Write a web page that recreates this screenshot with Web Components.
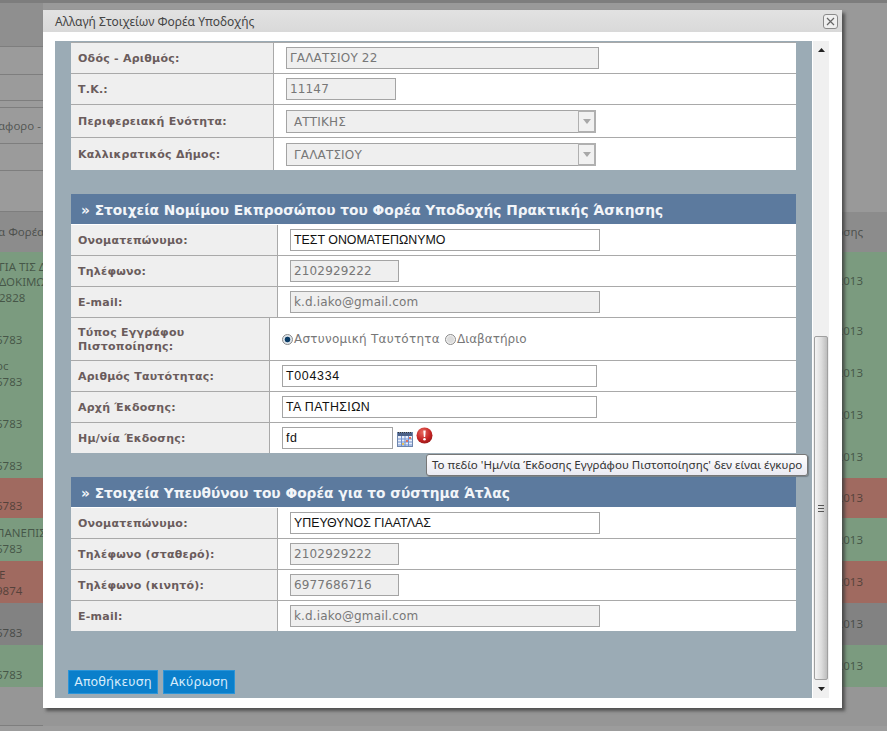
<!DOCTYPE html>
<html lang="el">
<head>
<meta charset="utf-8">
<title>Αλλαγή Στοιχείων Φορέα Υποδοχής</title>
<style>
  html, body { margin: 0; height: 731px; overflow: hidden; background: #9a9a9a; font-family: "DejaVu Sans", sans-serif; }
</style>
</head>
<body>
<page-backdrop></page-backdrop>
<edit-dialog heading="Αλλαγή Στοιχείων Φορέα Υποδοχής">
  <form-table>
    <form-row label="Οδός - Αριθμός:" col="203"><text-field width="313" off>ΓΑΛΑΤΣΙΟΥ 22</text-field></form-row>
    <form-row label="Τ.Κ.:" col="203"><text-field width="110" off>11147</text-field></form-row>
    <form-row label="Περιφερειακή Ενότητα:" col="203" h="33"><select-field>ΑΤΤΙΚΗΣ</select-field></form-row>
    <form-row label="Καλλικρατικός Δήμος:" col="203" h="33"><select-field>ΓΑΛΑΤΣΙΟΥ</select-field></form-row>
  </form-table>

  <section-head>» Στοιχεία Νομίμου Εκπροσώπου του Φορέα Υποδοχής Πρακτικής Άσκησης</section-head>
  <form-table>
    <form-row label="Ονοματεπώνυμο:" col="207" bare><text-field width="310">ΤΕΣΤ ΟΝΟΜΑΤΕΠΩΝΥΜΟ</text-field></form-row>
    <form-row label="Τηλέφωνο:" col="207"><text-field width="109" off>2102929222</text-field></form-row>
    <form-row label="E-mail:" col="207"><text-field width="310" off>k.d.iako@gmail.com</text-field></form-row>
    <form-row label="Τύπος Εγγράφου Πιστοποίησης:" col="199" h="43">
      <radio-option checked>Αστυνομική Ταυτότητα</radio-option><radio-option>Διαβατήριο</radio-option>
    </form-row>
    <form-row label="Αριθμός Ταυτότητας:" col="199"><text-field width="315" spacing=".7">Τ004334</text-field></form-row>
    <form-row label="Αρχή Έκδοσης:" col="199"><text-field width="315" spacing=".4">ΤΑ ΠΑΤΗΣΙΩΝ</text-field></form-row>
    <form-row label="Ημ/νία Έκδοσης:" col="199"><text-field width="111" spacing=".5">fd</text-field><date-status></date-status></form-row>
  </form-table>

  <section-head>» Στοιχεία Υπευθύνου του Φορέα για το σύστημα Άτλας</section-head>
  <form-table>
    <form-row label="Ονοματεπώνυμο:" col="207" bare><text-field width="310">ΥΠΕΥΘΥΝΟΣ ΓΙΑΑΤΛΑΣ</text-field></form-row>
    <form-row label="Τηλέφωνο (σταθερό):" col="207"><text-field width="109" off>2102929222</text-field></form-row>
    <form-row label="Τηλέφωνο (κινητό):" col="207"><text-field width="109" off>6977686716</text-field></form-row>
    <form-row label="E-mail:" col="207"><text-field width="310" off>k.d.iako@gmail.com</text-field></form-row>
  </form-table>

  <div slot="actions"><action-button width="90">Αποθήκευση</action-button><action-button width="72">Ακύρωση</action-button></div>
  <error-tip slot="tip">Το πεδίο 'Ημ/νία Έκδοσης Εγγράφου Πιστοποίησης' δεν είναι έγκυρο</error-tip>
</edit-dialog>

<script>
// rows of the list page that stays greyed out behind the dialog
const GREEN = '#7b9b7f', RED = '#a06a60', GREY = '#8c8c8c', PALE = '#9b9b9b';
const BACK_ROWS = [
  { h: 3, bg: '#7d7d7d' },
  { h: 44, bg: '#999', edge: 1, shade: '#8f8f8f' },
  { h: 28, bg: '#999', edge: 1, shade: PALE },
  { h: 26, bg: '#999', edge: 1, shade: PALE },
  { h: 7, bg: '#999', edge: 1, shade: PALE },
  { h: 36, bg: '#999', edge: 1, shade: PALE, left: ['αφορο -'], x: -2, mid: 1 },
  { h: 27, bg: '#999', edge: 1, shade: PALE },
  { h: 41, bg: '#999', edge: 1, shade: PALE },
  { h: 40, bg: GREY, left: ['α Φορέα'], right: 'οσης', x: -2, mid: 1 },
  { h: 58, bg: GREEN, left: ['ΓΙΑ ΤΙΣ Δ', 'ΔΟΚΙΜΩΝ', '2828'], right: '2013', x: -1 },
  { h: 42, bg: GREEN, left: ['6783'], right: '2013', x: -4 },
  { h: 42, bg: GREEN, left: ['οc', '6783'], right: '2013', x: -4 },
  { h: 42, bg: GREEN, left: ['6783'], right: '2013', x: -4 },
  { h: 42, bg: GREEN, left: ['6783'], right: '2013', x: -4 },
  { h: 40, bg: RED, left: ['6783'], right: '2013', x: -4 },
  { h: 43, bg: GREEN, left: ['ΠΑΝΕΠΙΣ', '6783'], right: '2013', x: -4 },
  { h: 42, bg: RED, left: ['.E', '9874'], right: '2013', x: -4 },
  { h: 42, bg: '#828282', left: ['6783'], right: '2013', x: -4 },
  { h: 42, bg: GREEN, left: ['6783'], right: '2013', x: -4 },
  { h: 39, bg: '#969696', edge: 1, shade: '#969696' },
  { h: 5, bg: '#9c9c9c' }
];

class PageBackdrop extends HTMLElement {
  connectedCallback() {
    this.attachShadow({ mode: 'open' });
    const rows = BACK_ROWS.map(r => {
      const lines = (r.left && r.left.length) ? r.left.map(t => `<div>${t}</div>`).join('') : '';
      return `<div class="row" style="height:${r.h}px;background:${r.bg}">
        <div class="left ${r.mid ? 'mid' : ''} ${r.edge ? 'edge' : ''}" style="${r.shade ? 'background:' + r.shade : ''}">
          <div style="margin-left:${r.x || 0}px">${lines}</div>
        </div>
        <div class="gap"></div>
        <div class="right">${r.right || ''}</div>
      </div>`;
    }).join('');
    this.shadowRoot.innerHTML = `
      <style>
        :host { display: block; height: 731px; overflow: hidden; font: 11.5px/15.500px "Noto Sans", sans-serif; color: rgba(35,40,35,.6); }
        .row { display: grid; grid-template-columns: 43px 1fr 45px; box-sizing: border-box; overflow: hidden; }
        .left { display: flex; flex-direction: column; justify-content: flex-end; padding-bottom: 5px; overflow: hidden; white-space: nowrap; box-sizing: border-box; }
        .left.mid { justify-content: center; padding-bottom: 0; }
        .left.edge { border-bottom: 1px solid #7e7e7e; }
        .right { display: flex; align-items: center; justify-content: flex-end; padding-right: 24px; white-space: nowrap; overflow: hidden; }
      </style>
      ${rows}`;
  }
}
customElements.define('page-backdrop', PageBackdrop);

class EditDialog extends HTMLElement {
  connectedCallback() {
    this.attachShadow({ mode: 'open' });
    this.shadowRoot.innerHTML = `
      <style>
        :host { position: absolute; left: 43px; top: 10px; width: 799px; height: 698px; background: #fff; box-shadow: 3px 3px 3px rgba(60,60,60,.75); display: block; }
        .bar { height: 22px; background: linear-gradient(#e2e2e2, #d9d9d9); display: flex; align-items: center; justify-content: space-between; padding: 0 4px 0 12px; font: 12px "Noto Sans", sans-serif; color: #444; }
        .close { width: 13px; height: 13px; border: 1px solid #8a8a8a; border-radius: 3px; background: #efefef; display: flex; align-items: center; justify-content: center; margin-top: 1px; }
        .wrap { display: flex; padding: 9px 13px 0 12px; height: 657px; }
        .panel { width: 757px; background: #9babb5; box-sizing: border-box; padding: 1px 16px 0 16px; position: relative; }
        .actions { position: absolute; left: 13px; bottom: 4px; }
      </style>
      <div class="bar">
        <span>${this.getAttribute('heading')}</span>
        <span class="close"><svg width="9" height="9" viewBox="0 0 9 9"><path d="M1 1l7 7M8 1L1 8" stroke="#666" stroke-width="1.200" fill="none"/></svg></span>
      </div>
      <div class="wrap">
        <div class="panel">
          <slot></slot>
          <div class="actions"><slot name="actions"></slot></div>
        </div>
        <scroll-bar></scroll-bar>
      </div>
      <slot name="tip"></slot>`;
  }
}
customElements.define('edit-dialog', EditDialog);

class ScrollBar extends HTMLElement {
  connectedCallback() {
    this.attachShadow({ mode: 'open' });
    this.shadowRoot.innerHTML = `
      <style>
        :host { display: flex; flex-direction: column; width: 16px; margin-left: 1px; background: #f0f0f0; height: 657px; box-sizing: border-box; }
        .btn { height: 18px; display: flex; align-items: center; justify-content: center; }
        .track { height: 277px; }
        .thumb { height: 344px; margin: 0 1px; box-sizing: border-box; border: 1px solid #a0a0a0; border-radius: 2px; background: linear-gradient(90deg, #f4f4f4, #dcdcdc 55%, #bdbdbd); display: flex; flex-direction: column; justify-content: center; align-items: center; }
        .grip { width: 6px; height: 7px; background: repeating-linear-gradient(#555 0 1px, transparent 1px 3px); }
      </style>
      <div class="btn"><svg width="7" height="4"><path d="M0 4L3.500 0L7 4z" fill="#222"/></svg></div>
      <div class="track"></div>
      <div class="thumb"><div class="grip"></div></div>
      <div class="btn"><svg width="7" height="4"><path d="M0 0L3.500 4L7 0z" fill="#222"/></svg></div>`;
  }
}
customElements.define('scroll-bar', ScrollBar);

class SectionHead extends HTMLElement {
  connectedCallback() {
    this.attachShadow({ mode: 'open' });
    this.shadowRoot.innerHTML = `
      <style>
        :host { display: block; height: 30px; margin-top: 24px; padding-left: 10px; background: #5c7a9e; color: #f2f5f9; font: bold 13.760px/32px "DejaVu Sans", sans-serif; white-space: nowrap; }
      </style>
      <slot></slot>`;
  }
}
customElements.define('section-head', SectionHead);

class FormTable extends HTMLElement {
  connectedCallback() {
    this.attachShadow({ mode: 'open' });
    this.shadowRoot.innerHTML = `<style>:host { display: block; background: #fff; }</style><slot></slot>`;
  }
}
customElements.define('form-table', FormTable);

class FormRow extends HTMLElement {
  connectedCallback() {
    this.attachShadow({ mode: 'open' });
    const h = this.getAttribute('h') || 31;
    const col = this.getAttribute('col') || 203;
    const line = this.hasAttribute('bare') ? 'transparent' : '#a9a9a9';
    this.shadowRoot.innerHTML = `
      <style>
        :host { display: grid; grid-template-columns: ${col}px 1fr; height: ${h}px; box-sizing: border-box; border-top: 1px solid ${line}; }
        .label { background: #efefef; border-right: 1px solid #a9a9a9; display: flex; align-items: center; padding: 2px 30px 0 7px; font: bold 11px/14.500px "DejaVu Sans", sans-serif; letter-spacing: .24px; color: #6a5c5c; }
        .value { display: flex; align-items: center; padding-left: 12px; min-width: 0; }
      </style>
      <div class="label">${this.getAttribute('label')}</div>
      <div class="value"><slot></slot></div>`;
  }
}
customElements.define('form-row', FormRow);

class TextField extends HTMLElement {
  connectedCallback() {
    this.attachShadow({ mode: 'open' });
    const off = this.hasAttribute('off');
    const spacing = this.getAttribute('spacing') || (off ? '.15' : '0');
    this.shadowRoot.innerHTML = `
      <style>
        :host { display: block; box-sizing: border-box; width: ${this.getAttribute('width')}px; height: 22px; border: 1px solid #a4a4a4; padding-left: 3px; white-space: nowrap; overflow: hidden;
          background: ${off ? '#efefef' : '#fff'}; color: ${off ? '#777' : '#111'}; letter-spacing: ${spacing}px;
          font: ${off ? '12px/21px "DejaVu Sans"' : '12.400px/21px "Liberation Sans"'}, sans-serif; }
      </style>
      <slot></slot>`;
  }
}
customElements.define('text-field', TextField);

class SelectField extends HTMLElement {
  connectedCallback() {
    this.attachShadow({ mode: 'open' });
    this.shadowRoot.innerHTML = `
      <style>
        :host { display: flex; box-sizing: border-box; width: 310px; height: 23px; border: 1px solid #a4a4a4; background: #efefef; color: #777; font: 12px/22px "DejaVu Sans", sans-serif; letter-spacing: .15px; }
        .text { flex: 1; padding-left: 7px; }
        .arrow { width: 18px; box-sizing: border-box; border: 2px solid #b0b0b0; border-left-width: 1px; margin: -1px -1px -1px 0; height: 23px; background: #f1f1f1; display: flex; align-items: center; justify-content: center; }
      </style>
      <span class="text"><slot></slot></span>
      <span class="arrow"><svg width="8" height="5"><path d="M0 0h8L4 5z" fill="#a8a8a8"/></svg></span>`;
  }
}
customElements.define('select-field', SelectField);

class RadioOption extends HTMLElement {
  connectedCallback() {
    this.attachShadow({ mode: 'open' });
    const on = this.hasAttribute('checked');
    this.shadowRoot.innerHTML = `
      <style>
        :host { display: inline-flex; align-items: center; color: #777; font: 12px "DejaVu Sans", sans-serif; letter-spacing: ${on ? '.25' : '0'}px; margin-right: 5px; }
        .dot { width: 11px; height: 11px; box-sizing: border-box; border-radius: 50%; border: 1px solid #8a8a8a; background: ${on ? 'radial-gradient(circle, #0b3c66 0 2.500px, #dfe6ec 3.200px)' : 'radial-gradient(circle, #dcdcdc 0 3px, #f2f2f2 4px)'}; margin-right: 1px; }
      </style>
      <span class="dot"></span><slot></slot>`;
  }
}
customElements.define('radio-option', RadioOption);

class DateStatus extends HTMLElement {
  connectedCallback() {
    this.attachShadow({ mode: 'open' });
    this.shadowRoot.innerHTML = `
      <style>
        :host { display: flex; align-items: flex-start; gap: 3px; margin-left: 4px; height: 22px; }
        .cal { margin-top: 4px; }
      </style>
      <svg class="cal" width="16" height="16" viewBox="0 0 16 16">
        <rect x=".5" y="1.500" width="15" height="14" fill="#e9eff8" stroke="#6e86ad"/>
        <path d="M1 1.500h14" stroke="#333" stroke-dasharray="1 1"/>
        <rect x="1" y="2" width="14" height="3" fill="#4a5f86"/>
        <path d="M1 8h14M1 11h14M1 14h14M4.500 5v10M8 5v10M11.500 5v10" stroke="#6f8fd0" stroke-width="1"/>
        <rect x="9" y="9" width="2" height="2" fill="#e0705a"/>
        <rect x="5" y="12" width="2" height="2" fill="#e8c25a"/>
        <rect x="12" y="6" width="2" height="2" fill="#e0705a"/>
      </svg>
      <svg width="17" height="17" viewBox="0 0 17 17">
        <defs><radialGradient id="r" cx=".4" cy=".3" r=".8"><stop offset="0" stop-color="#e86a60"/><stop offset=".6" stop-color="#c42424"/><stop offset="1" stop-color="#8e1616"/></radialGradient></defs>
        <circle cx="8.500" cy="8.500" r="8" fill="url(#r)"/>
        <path d="M7.300 3.500h2.400l-.5 6.500H7.800z" fill="#fff"/>
        <circle cx="8.500" cy="12.300" r="1.300" fill="#fff"/>
      </svg>`;
  }
}
customElements.define('date-status', DateStatus);

class ErrorTip extends HTMLElement {
  connectedCallback() {
    this.attachShadow({ mode: 'open' });
    this.shadowRoot.innerHTML = `
      <style>
        :host { position: absolute; left: 383px; top: 444px; width: 382px; height: 22px; box-sizing: border-box; border: 1px solid #777; border-radius: 3px; background: linear-gradient(#fff, #e9e9f1); box-shadow: 1px 1px 1px rgba(0,0,0,.25); font: 11.560px/20px "Noto Sans", sans-serif; color: #333; padding-left: 5px; white-space: nowrap; }
      </style>
      <slot></slot>`;
  }
}
customElements.define('error-tip', ErrorTip);

class ActionButton extends HTMLElement {
  connectedCallback() {
    this.attachShadow({ mode: 'open' });
    this.shadowRoot.innerHTML = `
      <style>
        :host { display: inline-block; box-sizing: border-box; width: ${this.getAttribute('width')}px; height: 24px; margin-right: 5px; text-align: center; background: #0a7fcb; border: 1px solid #2a94d8; color: #d6ecfb; font: 12.500px/22px "DejaVu Sans", sans-serif; letter-spacing: .1px; }
      </style>
      <slot></slot>`;
  }
}
customElements.define('action-button', ActionButton);
</script>
</body>
</html>
